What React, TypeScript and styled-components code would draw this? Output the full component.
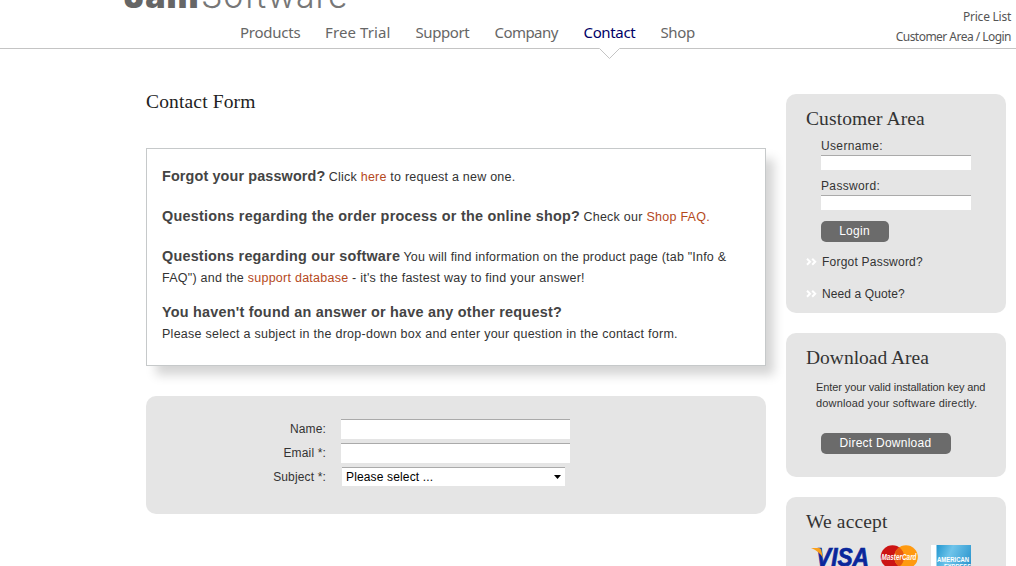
import React from "react";
import styled, { createGlobalStyle } from "styled-components";

const GlobalStyle = createGlobalStyle`
  * { box-sizing: border-box; }
  html, body { margin: 0; padding: 0; height: 566px; overflow: hidden; background: #fff; }
  body { font-family: "Liberation Sans", Arial, sans-serif; font-size: 12px; color: #333; }
  h1, h2, p { margin: 0; font-weight: normal; }
  a { text-decoration: none; color: inherit; }
`;

const Page = styled.div`
  width: 1016px;
  height: 566px;
  overflow: hidden;
`;

const Header = styled.header`
  display: flex;
  justify-content: space-between;
  height: 49px;
  border-bottom: 1px solid #c4c4c4;
`;

const Brand = styled.div`
  padding-left: 124px;
`;

const LogoClip = styled.div`
  height: 12px;
  overflow: hidden;
  display: flex;
  align-items: flex-end;
`;

const Logo = styled.div`
  display: flex;
  line-height: 40px;
  height: 40px;
  margin-bottom: -4px;
  font-family: Inter, sans-serif;
  font-size: 34px;
  color: #666;
`;

const LogoBold = styled.span`
  width: 77px;
  font-weight: 900;
  letter-spacing: 1px;
`;

const LogoThin = styled.span`
  font-weight: 300;
  letter-spacing: 0.8px;
  color: #777;
`;

const Nav = styled.nav`
  display: flex;
  padding: 9px 0 0 116px;
  gap: 25px;
`;

const NavLink = styled.a<{ $w: number; $active?: boolean; $ls?: number }>`
  position: relative;
  width: ${(p) => p.$w}px;
  height: 27px;
  font-family: "Noto Sans", sans-serif;
  font-size: 15px;
  line-height: 22px;
  white-space: nowrap;
  letter-spacing: ${(p) => p.$ls ?? 0}px;
  color: ${(p) => (p.$active ? "#000066" : "#666")};
`;

const Pointer = styled.svg`
  position: absolute;
  left: 15px;
  top: 27px;
`;

const TopLinks = styled.div`
  display: flex;
  flex-direction: column;
  align-items: flex-end;
  padding: 7px 5px 0 0;
  font-family: "Noto Sans", sans-serif;
  font-size: 12px;
  line-height: 20px;
  color: #555;
`;

const TopLink = styled.a<{ $ls: number }>`
  letter-spacing: ${(p) => p.$ls}px;
`;

const Columns = styled.div`
  display: flex;
  gap: 20px;
  padding: 45px 10px 0 146px;
`;

const Main = styled.main`
  width: 620px;
`;

const Title = styled.h1`
  height: 54px;
  font-family: "Liberation Serif", serif;
  font-size: 19.5px;
  line-height: 16px;
  letter-spacing: 0.15px;
  color: #222;
`;

const Notice = styled.section`
  height: 218px;
  padding: 18px 15px 0;
  border: 1px solid #c6c9ca;
  background: #fff;
  box-shadow: 9px 10px 10px -1px rgba(0, 0, 0, 0.17);
`;

const Para = styled.p<{ $gap: number }>`
  margin-bottom: ${(p) => p.$gap}px;
  line-height: 21px;
  white-space: nowrap;
`;

const Strong = styled.strong<{ $ls: number }>`
  font-size: 14.4px;
  line-height: 1;
  color: #444;
  letter-spacing: ${(p) => p.$ls}px;
`;

const Run = styled.span<{ $ls: number }>`
  font-size: 12.5px;
  line-height: 1;
  letter-spacing: ${(p) => p.$ls}px;
`;

const Link = styled.a`
  color: #b5491c;
`;

const FormPanel = styled.form`
  display: grid;
  grid-template-columns: 180px 230px;
  grid-auto-rows: 24px;
  column-gap: 15px;
  height: 118px;
  margin-top: 30px;
  padding-top: 23px;
  border-radius: 10px;
  background: #e5e5e5;
`;

const Label = styled.label`
  text-align: right;
  line-height: 20px;
  letter-spacing: 0.15px;
`;

const Field = styled.input<{ $w: number; $h: number }>`
  display: block;
  width: ${(p) => p.$w}px;
  height: ${(p) => p.$h}px;
  padding: 0 4px;
  border: 0;
  border-top: 1px solid #aaa;
  border-radius: 0;
  background: #fff;
  outline: 0;
`;

const SelectBox = styled.div`
  display: flex;
  align-items: center;
  justify-content: space-between;
  width: 223px;
  height: 19px;
  margin-left: 1px;
  padding: 0 4px;
  border-top: 1px solid #aaa;
  background: #fff;
  color: #000;
  letter-spacing: 0.15px;
`;

const Side = styled.aside`
  display: flex;
  flex-direction: column;
  gap: 20px;
  width: 220px;
`;

const Card = styled.section<{ $h: number }>`
  flex: none;
  height: ${(p) => p.$h}px;
  padding: 15px 0 0 20px;
  border-radius: 10px;
  background: #e5e5e5;
`;

const CardTitle = styled.h2<{ $ls: number }>`
  height: 26px;
  font-family: "Liberation Serif", serif;
  font-size: 19.5px;
  line-height: 20px;
  letter-spacing: ${(p) => p.$ls}px;
`;

const Login = styled.form`
  padding-left: 15px;
`;

const LoginLabel = styled.label`
  display: block;
  height: 20px;
  line-height: 22px;
  letter-spacing: 0.35px;
`;

const LoginField = styled.div`
  height: 20px;
`;

const Button = styled.button<{ $w: number; $top: number }>`
  display: block;
  width: ${(p) => p.$w}px;
  height: 21px;
  margin-top: ${(p) => p.$top}px;
  padding: 0 1px 2px 0;
  border: 0;
  border-radius: 5px;
  background: #6b6b6b;
  color: #fff;
  font: 12px "Liberation Sans", Arial, sans-serif;
  letter-spacing: 0.25px;
`;

const ArrowLinks = styled.div`
  padding-top: 4px;
`;

const ArrowLink = styled.a<{ $ls: number }>`
  display: flex;
  align-items: center;
  gap: 5px;
  height: 32px;
  letter-spacing: ${(p) => p.$ls}px;
`;

const Blurb = styled.p`
  padding: 5px 0 0 10px;
  font-size: 11px;
  line-height: 16px;
  white-space: nowrap;
`;

const BlurbLine = styled.span<{ $ls: number }>`
  display: block;
  letter-spacing: ${(p) => p.$ls}px;
`;

const PayRow = styled.div`
  display: flex;
  align-items: flex-start;
  gap: 8px;
  padding: 7px 0 0 4px;
`;

const AmexLogo = styled.svg`
  margin-left: 5px;
`;

const nav = [
  { label: "Products", w: 60, ls: -0.25 },
  { label: "Free Trial", w: 65.5, ls: 0.1 },
  { label: "Support", w: 54, ls: -0.4 },
  { label: "Company", w: 64, ls: -0.55 },
  { label: "Contact", w: 52, ls: -0.35, active: true },
  { label: "Shop", w: 35, ls: -0.4 },
];

const Chevrons = () => (
  <svg width="11" height="9" viewBox="0 0 11 9" fill="none" stroke="#fff" strokeWidth="2">
    <path d="M1 0.8l3 3L1 6.8M6.200 0.800l3 3L6.200 6.800" />
  </svg>
);

const Visa = () => (
  <svg width="62" height="24" viewBox="0 0 62 24">
    <text
      x="6"
      y="20.5"
      fontFamily="Liberation Sans"
      fontWeight="bold"
      fontStyle="italic"
      fontSize="25"
      fill="#0a279b"
      stroke="#0a279b"
      strokeWidth="0.7"
      textLength="53"
      lengthAdjust="spacingAndGlyphs"
    >
      VISA
    </text>
    <path d="M1 3h8q1.800 0 2.200 1.800L13 13Q9 6 1 3z" fill="#f9a01b" />
  </svg>
);

const MasterCard = () => (
  <svg width="38" height="24" viewBox="0 0 38 24">
    <circle cx="12.500" cy="12" r="11.800" fill="#cc1414" />
    <circle cx="26" cy="12" r="11.800" fill="#ff9a10" />
    <path d="M19.200 2.300a12 12 0 0 1 0 19.400a12 12 0 0 1 0-19.400z" fill="#e8590f" />
    <text
      x="1.500"
      y="14.500"
      fontFamily="Liberation Sans"
      fontWeight="bold"
      fontStyle="italic"
      fontSize="8.500"
      fill="#fff"
      textLength="35"
      lengthAdjust="spacingAndGlyphs"
    >
      MasterCard
    </text>
  </svg>
);

const Amex = () => (
  <AmexLogo width="40" height="40" viewBox="0 0 40 40">
    <defs>
      <linearGradient id="amex" x1="0" y1="0" x2="1" y2="0.5">
        <stop offset="0" stopColor="#2196cf" />
        <stop offset="0.4" stopColor="#6fc4ea" />
        <stop offset="1" stopColor="#2a94cd" />
      </linearGradient>
    </defs>
    <rect width="40" height="40" fill="#fff" />
    <rect x="5.500" width="34.500" height="40" fill="url(#amex)" />
    <g fontFamily="Liberation Sans" fontWeight="bold" fontSize="7.500" fill="#fff">
      <text x="6" y="16.500" textLength="32" lengthAdjust="spacingAndGlyphs">AMERICAN</text>
      <text x="13" y="23.500" textLength="27" lengthAdjust="spacingAndGlyphs">EXPRESS</text>
    </g>
  </AmexLogo>
);

export default function App() {
  return (
    <Page>
      <GlobalStyle />
      <Header>
        <Brand>
          <LogoClip>
            <Logo>
              <LogoBold>Jam</LogoBold>
              <LogoThin>Software</LogoThin>
            </Logo>
          </LogoClip>
          <Nav>
            {nav.map((n) => (
              <NavLink key={n.label} $w={n.w} $ls={n.ls} $active={n.active}>
                {n.label}
                {n.active && (
                  <Pointer width="21" height="12" viewBox="0 0 21 12">
                    <path d="M0 0h21L10.500 10.500z" fill="#fff" />
                    <path d="M0.500 0.500l10 10l10-10" fill="none" stroke="#c4c4c4" />
                  </Pointer>
                )}
              </NavLink>
            ))}
          </Nav>
        </Brand>
        <TopLinks>
          <TopLink $ls={-0.25}>Price List</TopLink>
          <TopLink $ls={-0.53}>Customer Area / Login</TopLink>
        </TopLinks>
      </Header>
      <Columns>
        <Main>
          <Title>Contact Form</Title>
          <Notice>
            <Para $gap={19}>
              <Strong $ls={0.13}>Forgot your password?</Strong>{" "}
              <Run $ls={0.23}>Click <Link>here</Link> to request a new one.</Run>
            </Para>
            <Para $gap={19}>
              <Strong $ls={0.25}>Questions regarding the order process or the online shop?</Strong>{" "}
              <Run $ls={0.26}>Check our <Link>Shop FAQ.</Link></Run>
            </Para>
            <Para $gap={14}>
              <Strong $ls={0.22}>Questions regarding our software</Strong>{" "}
              <Run $ls={0.2}>You will find information on the product page (tab "Info &amp;</Run>
              <br />
              <Run $ls={0.25}>FAQ") and the <Link>support database</Link> - it's the fastest way to find your answer!</Run>
            </Para>
            <Para $gap={0}>
              <Strong $ls={0.24}>You haven't found an answer or have any other request?</Strong>
              <br />
              <Run $ls={0.26}>Please select a subject in the drop-down box and enter your question in the contact form.</Run>
            </Para>
          </Notice>
          <FormPanel>
            <Label>Name:</Label>
            <Field $w={229} $h={20} />
            <Label>Email *:</Label>
            <Field $w={229} $h={20} />
            <Label>Subject *:</Label>
            <SelectBox>
              Please select ...
              <svg width="7" height="4" viewBox="0 0 7 4"><path d="M0 0h7L3.500 4z" /></svg>
            </SelectBox>
          </FormPanel>
        </Main>
        <Side>
          <Card $h={219}>
            <CardTitle $ls={0.1}>Customer Area</CardTitle>
            <Login>
              <LoginLabel>Username:</LoginLabel>
              <LoginField><Field $w={150} $h={15} /></LoginField>
              <LoginLabel>Password:</LoginLabel>
              <LoginField><Field $w={150} $h={15} /></LoginField>
              <Button $w={68} $top={6}>Login</Button>
            </Login>
            <ArrowLinks>
              <ArrowLink $ls={0.22}><Chevrons />Forgot Password?</ArrowLink>
              <ArrowLink $ls={0.1}><Chevrons />Need a Quote?</ArrowLink>
            </ArrowLinks>
          </Card>
          <Card $h={144}>
            <CardTitle $ls={0}>Download Area</CardTitle>
            <Blurb>
              <BlurbLine $ls={-0.1}>Enter your valid installation key and</BlurbLine>
              <BlurbLine $ls={0.15}>download your software directly.</BlurbLine>
            </Blurb>
            <Login>
              <Button $w={130} $top={22}>Direct Download</Button>
            </Login>
          </Card>
          <Card $h={144}>
            <CardTitle $ls={0.15}>We accept</CardTitle>
            <PayRow>
              <Visa />
              <MasterCard />
              <Amex />
            </PayRow>
          </Card>
        </Side>
      </Columns>
    </Page>
  );
}
